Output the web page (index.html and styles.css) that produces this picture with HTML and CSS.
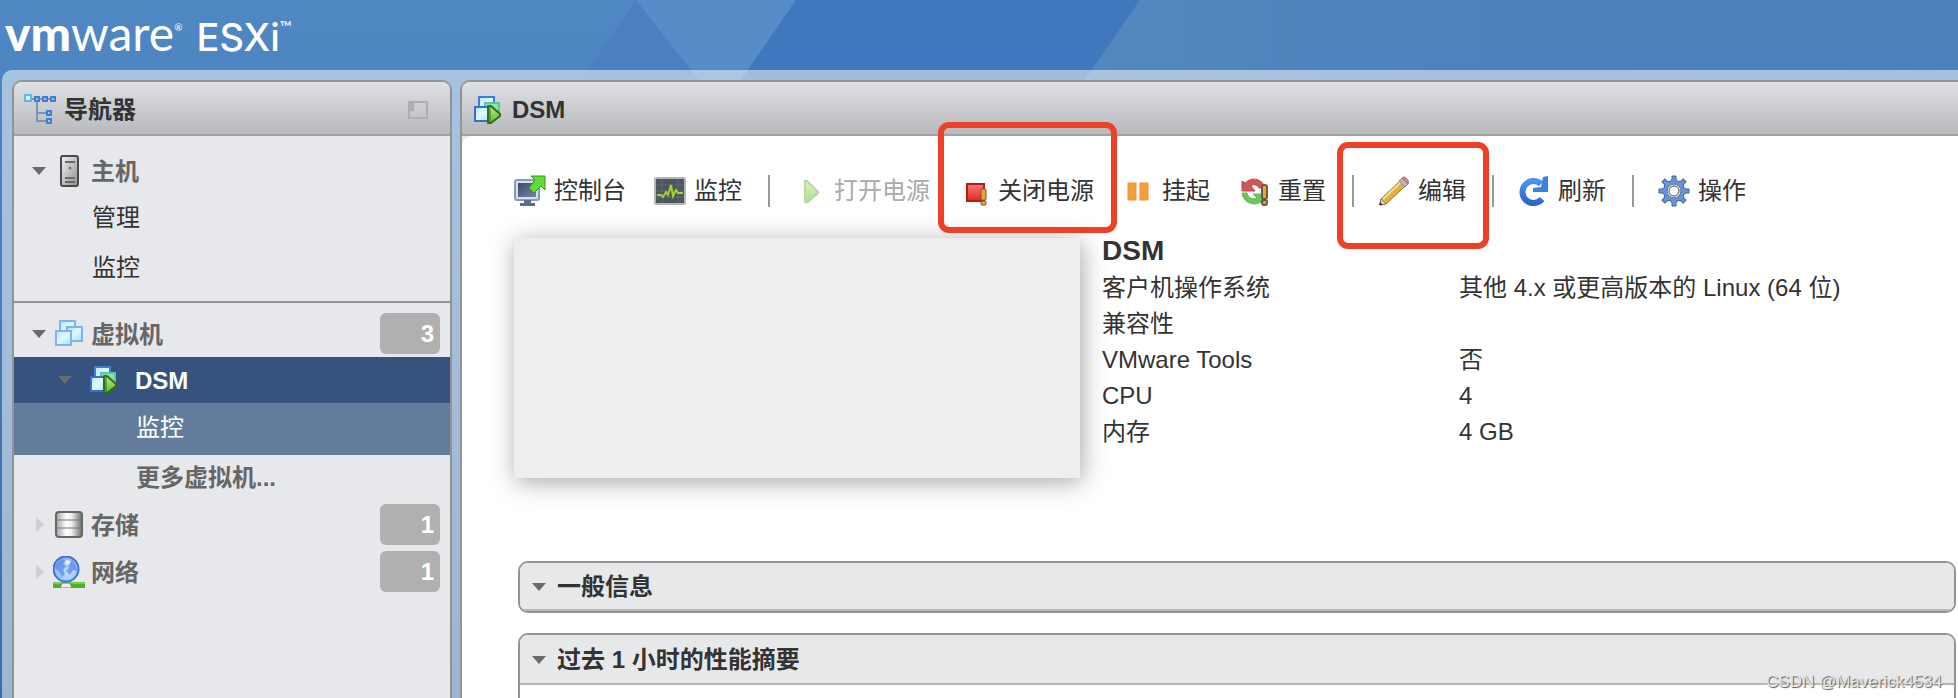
FILE: index.html
```html
<!DOCTYPE html>
<html lang="zh-CN">

<head>
    <meta charset="UTF-8">
    <meta name="viewport" content="width=device-width, initial-scale=1.0">
    <title>DSM - VMware ESXi</title>
    <link rel="stylesheet" href="styles.css">
</head>

<body>
    <!-- shared icons and gradients -->
    <svg class="defs" width="0" height="0" aria-hidden="true">
        <defs>
            <linearGradient id="g-vm" x1="0" y1="0" x2="1" y2="1">
                <stop offset="0" stop-color="#b4e4fa" />
                <stop offset=".5" stop-color="#dffafa" />
                <stop offset="1" stop-color="#a5dcf8" />
            </linearGradient>
            <linearGradient id="g-green" x1="0" y1="0" x2="0" y2="1">
                <stop offset="0" stop-color="#b9ec7c" />
                <stop offset="1" stop-color="#5fb934" />
            </linearGradient>
            <linearGradient id="g-metal" x1="0" y1="0" x2="1" y2="0">
                <stop offset="0" stop-color="#a2a2a2" />
                <stop offset=".4" stop-color="#fff" />
                <stop offset=".6" stop-color="#eee" />
                <stop offset="1" stop-color="#6c6c6c" />
            </linearGradient>
            <linearGradient id="g-host" x1="0" y1="0" x2="1" y2="1">
                <stop offset="0" stop-color="#f4f4f4" />
                <stop offset="1" stop-color="#8d8d8d" />
            </linearGradient>
            <linearGradient id="g-screen" x1="0" y1="0" x2="1" y2="1">
                <stop offset="0" stop-color="#3d4c69" />
                <stop offset="1" stop-color="#7385a6" />
            </linearGradient>
            <linearGradient id="g-red" x1="0" y1="0" x2="0" y2="1">
                <stop offset="0" stop-color="#f47a70" />
                <stop offset="1" stop-color="#e5261e" />
            </linearGradient>
            <linearGradient id="g-blue" x1="0" y1="0" x2="0" y2="1">
                <stop offset="0" stop-color="#4a92ee" />
                <stop offset="1" stop-color="#2f66cb" />
            </linearGradient>
            <radialGradient id="g-globe" cx=".6" cy=".65" r=".6">
                <stop offset="0" stop-color="#c4e1ff" />
                <stop offset="1" stop-color="#86b4f4" />
            </radialGradient>
        </defs>
        <symbol id="vm-on" viewBox="0 0 32 32">
            <rect x="7" y="3" width="15" height="13" fill="url(#g-vm)" stroke="#3f7fd3" stroke-width="2" />
            <rect x="13" y="9" width="14" height="13" fill="#8be3b4" stroke="#5cc5a0" stroke-width="2" />
            <rect x="3" y="13" width="15" height="14" fill="url(#g-vm)" stroke="#3b6fc6" stroke-width="2" />
            <path d="M16 12h3l9 8v2l-9 7h-3z" fill="url(#g-green)" stroke="#2c7018" stroke-width="2" stroke-linejoin="round" />
            <path d="M18 12v17" stroke="#2c7018" stroke-width="1" />
        </symbol>
        <symbol id="down" viewBox="0 0 18 18">
            <path d="M2 5h14l-7 8z" fill="#6b6b6b" />
        </symbol>
        <symbol id="right" viewBox="0 0 18 18">
            <path d="M6 1v15l8-7z" fill="#cfd0d4" />
        </symbol>
    </svg>

    <svg class="facets" width="1958" height="80" aria-hidden="true">
        <defs>
            <linearGradient id="g-edge" x1="0" y1="0" x2="1" y2="0">
                <stop offset="0" stop-color="#5388bf" />
                <stop offset=".3" stop-color="#4d82bc" />
                <stop offset="1" stop-color="#4b80ba" />
            </linearGradient>
        </defs>
        <path d="M636 0L581 80H699z" fill="#4b7fc0" />
        <path d="M636 0H796L741 80H699z" fill="#568cc7" />
        <path d="M796 0H1140L1085 80H741z" fill="#4178bd" />
        <path d="M1140 0H1958V80H1085z" fill="url(#g-edge)" />
    </svg>

    <header class="banner">
        <span class="vm">vm</span><span class="ware">ware</span><sup class="reg">®</sup>
        <span class="esxi">ESXi</span><sup class="tm">™</sup>
    </header>

    <div class="workspace">
        <nav class="panel navigator">
            <div class="panel-head">
                <svg class="icon" viewBox="0 0 32 32" fill="none">
                    <path d="M8 5h20M13 5v22h10M13 19h10" stroke="#8093b4" stroke-width="2" />
                    <path d="M1 1h6v6h-6z" fill="#c9f2fc" stroke="#62b5e8" stroke-width="2" />
                    <path d="M11 3h4v4h-4zM19 3h4v4h-4zM27 3h4v4h-4zM23 17h4v4h-4zM23 25h4v4h-4z" fill="#9cc8f7" stroke="#3f7fd6" stroke-width="2" />
                </svg>
                <h2>导航器</h2>
                <button class="collapse" aria-label="折叠">
                    <svg width="20" height="18" viewBox="0 0 20 18">
                        <path d="M1 1h18v16H1z" fill="none" stroke="#adaeb2" stroke-width="2" />
                        <path d="M1 1h5v9H1z" fill="#adaeb2" />
                    </svg>
                </button>
            </div>

            <div class="group host">
                <a class="item" href="#">
                    <svg class="arrow"><use href="#down" /></svg>
                    <svg class="icon" viewBox="0 0 32 32">
                        <rect x="8" y="1" width="17" height="30" rx="2" fill="url(#g-host)" stroke="#4a4a4a" stroke-width="2" />
                        <path d="M12 7h10M12 23h10M12 27h10" stroke="#6a6a6a" stroke-width="2" />
                        <circle cx="17" cy="13" r="1.5" fill="#777" />
                    </svg>
                    <span>主机</span>
                </a>
                <a class="sub" href="#">管理</a>
                <a class="sub tall" href="#">监控</a>
            </div>

            <div class="group">
                <a class="item" href="#">
                    <svg class="arrow"><use href="#down" /></svg>
                    <svg class="icon" viewBox="0 0 32 32" stroke="#7cb4f5" stroke-width="2" fill="url(#g-vm)">
                        <rect x="7" y="3" width="15" height="13" />
                        <rect x="14" y="9" width="15" height="14" />
                        <rect x="3" y="13" width="15" height="14" />
                    </svg>
                    <span>虚拟机</span>
                    <span class="count">3</span>
                </a>
                <a class="item selected" href="#">
                    <svg class="arrow"><use href="#down" /></svg>
                    <svg class="icon"><use href="#vm-on" /></svg>
                    <span>DSM</span>
                </a>
                <a class="sub deep tall current" href="#">监控</a>
                <a class="sub deep more" href="#">更多虚拟机...</a>
                <a class="item" href="#">
                    <svg class="arrow"><use href="#right" /></svg>
                    <svg class="icon" viewBox="0 0 32 32">
                        <rect x="3" y="3" width="26" height="25" rx="3" fill="url(#g-metal)" stroke="#666" stroke-width="2" />
                        <path d="M3 11h26M3 19h26" stroke="#777" stroke-width="1" />
                    </svg>
                    <span>存储</span>
                    <span class="count">1</span>
                </a>
                <a class="item" href="#">
                    <svg class="arrow"><use href="#right" /></svg>
                    <svg class="icon" viewBox="0 0 32 32">
                        <path d="M0 26h32v6H0z" fill="#4fb02b" />
                        <path d="M0 26h32v2H0z" fill="#77cf50" />
                        <path d="M7 32l2-5h8l2 5z" fill="#eee" stroke="#777" />
                        <circle cx="13" cy="13" r="12.5" fill="url(#g-globe)" stroke="#3c74cd" stroke-width="2" />
                        <path d="M3 8l5-5 4 1-2 4 3 2-3 4 2 4-3 3-3-6-4-3z" fill="#628ee8" opacity=".8" />
                        <path d="M19 4l4 5 1 6-4-1-3 5-4-4 3-3-1-5z" fill="#628ee8" opacity=".8" />
                        <path d="M13 4l5 1-2 4-4-1z" fill="#fff" opacity=".8" />
                    </svg>
                    <span>网络</span>
                    <span class="count">1</span>
                </a>
            </div>
        </nav>

        <main class="panel detail">
            <div class="panel-head">
                <svg class="icon"><use href="#vm-on" /></svg>
                <h2>DSM</h2>
            </div>

            <div class="content">
                <div class="toolbar">
                    <button>
                        <svg class="icon" viewBox="0 0 32 32">
                            <rect x="1" y="5" width="24" height="20" rx="2" fill="#d6dfec" stroke="#8b9cb9" stroke-width="2" />
                            <rect x="4" y="8" width="18" height="14" fill="url(#g-screen)" />
                            <path d="M10 25h7v3h4v3H6v-3h4z" fill="#5a6d90" />
                            <path d="M17 1h14v14l-4-4-7 7-5-5 6-8z" fill="#5fdc35" stroke="#2f9a17" />
                        </svg>
                        控制台
                    </button>
                    <button>
                        <svg class="icon" viewBox="0 0 32 32">
                            <rect x="1" y="3" width="30" height="26" rx="1" fill="#4b575e" stroke="#b4b7b9" stroke-width="2" />
                            <path d="M2 10h28M2 16h28M2 22h28M8 4v24M24 4v24" stroke="#5e6a70" />
                            <path d="M3 20h4l2 2 3-5 2 3 3-10 2 11 3-6 2 3h5" fill="none" stroke="#a9cf2c" stroke-width="2" />
                        </svg>
                        监控
                    </button>
                    <span class="sep"></span>
                    <button disabled>
                        <svg class="icon" viewBox="0 0 32 32">
                            <path d="M11 6h2l11 11v1L14 27h-3z" fill="url(#g-green)" stroke="#6bb64e" stroke-width="2" />
                        </svg>
                        打开电源
                    </button>
                    <button class="marked power">
                        <svg class="icon" viewBox="0 0 32 32">
                            <rect x="9" y="9" width="17" height="17" fill="url(#g-red)" stroke="#b41d17" stroke-width="2" />
                            <rect x="23" y="14" width="5" height="11" rx="1" fill="#f3a129" stroke="#6b5b43" />
                            <rect x="23" y="26" width="5" height="4" rx="1" fill="#f3a129" stroke="#6b5b43" />
                        </svg>
                        关闭电源
                    </button>
                    <button>
                        <svg class="icon" viewBox="0 0 32 32" fill="#f0a035" stroke="#e8953a">
                            <rect x="6" y="8" width="8" height="17" />
                            <rect x="18" y="8" width="8" height="17" />
                        </svg>
                        挂起
                    </button>
                    <button>
                        <svg class="icon" viewBox="0 0 32 32">
                            <path d="M4 18h5c1 5 6 7 10 5l-4-4h12v11l-4-3C15 32 5 27 4 18z" fill="#69c657" stroke="#6cba62" />
                            <path d="M4 6l3 2C14 1 25 4 27 13h-6c-2-4-6-4-8-2l4 5H4z" fill="#cf5a54" stroke="#b94a48" />
                            <rect x="24" y="10" width="5" height="14" rx="2" fill="#f3a129" stroke="#6b5b43" stroke-width="2" />
                            <rect x="24" y="25" width="5" height="5" rx="2" fill="#f3a129" stroke="#6b5b43" stroke-width="2" />
                        </svg>
                        重置
                    </button>
                    <span class="sep"></span>
                    <button class="marked edit">
                        <svg class="icon" viewBox="0 0 32 32">
                            <path d="M3 24L22 6l5 5L8 29l-6 1z" fill="#e3b043" stroke="#8c6c2a" />
                            <path d="M5 24L23 7" stroke="#f8dd8c" stroke-width="2" />
                            <path d="M2 30l1-6 5 5z" fill="#efdcae" stroke="#8f8265" />
                            <path d="M1 30l1-3 3 3z" fill="#333" />
                            <path d="M21 6l3-3 6 6-3 3z" fill="#b8b8b8" stroke="#888" />
                            <path d="M24 3c2-3 8 2 6 6z" fill="#d98583" stroke="#a86b69" />
                        </svg>
                        编辑
                    </button>
                    <span class="sep"></span>
                    <button>
                        <svg class="icon" viewBox="0 0 32 32">
                            <path d="M24 24A11 11 0 1 1 23 9" fill="none" stroke="url(#g-blue)" stroke-width="6" />
                            <path d="M25 2l5-1v16H15v-4l8-1z" fill="#3c80e0" />
                        </svg>
                        刷新
                    </button>
                    <span class="sep"></span>
                    <button>
                        <svg class="icon" viewBox="0 0 32 32">
                            <g fill="#6594db" stroke="#46618f">
                                <path id="tooth" d="M12 7l2-3V1h4v3l2 3v18l-2 3v3h-4v-3l-2-3z" />
                                <use href="#tooth" transform="rotate(45 16 16)" />
                                <use href="#tooth" transform="rotate(90 16 16)" />
                                <use href="#tooth" transform="rotate(135 16 16)" />
                            </g>
                            <circle cx="16" cy="16" r="10" fill="#6594db" />
                            <circle cx="16" cy="16" r="7" fill="#e4e4e4" stroke="#5c7095" />
                            <circle cx="16" cy="16" r="5" fill="#fff" stroke="#555" />
                        </svg>
                        操作
                    </button>
                </div>

                <div class="summary">
                    <div class="thumb"></div>
                    <div class="facts">
                        <h1>DSM</h1>
                        <dl>
                            <dt>客户机操作系统</dt>
                            <dd>其他 4.x 或更高版本的 Linux (64 位)</dd>
                            <dt>兼容性</dt>
                            <dd></dd>
                            <dt>VMware Tools</dt>
                            <dd>否</dd>
                            <dt>CPU</dt>
                            <dd>4</dd>
                            <dt>内存</dt>
                            <dd>4 GB</dd>
                        </dl>
                    </div>
                </div>

                <section class="card">
                    <h3><svg class="arrow"><use href="#down" /></svg>一般信息</h3>
                </section>
                <section class="card open">
                    <h3><svg class="arrow"><use href="#down" /></svg>过去 1 小时的性能摘要</h3>
                </section>
            </div>
        </main>
    </div>

    <div class="watermark">CSDN @Maverick4534</div>
</body>

</html>
```

FILE: styles.css
```css
* {
    margin: 0;
    padding: 0;
    box-sizing: border-box;
}

body {
    height: 100vh;
    display: flex;
    flex-direction: column;
    overflow: hidden;
    position: relative;
    font-family: "Liberation Sans", "Noto Sans CJK SC", Arial, sans-serif;
    font-size: 24px;
    line-height: 36px;
    color: #333;
    background: linear-gradient(#4f88c3, #3d6ca6);
}

a {
    color: inherit;
    text-decoration: none;
}

.defs {
    position: absolute;
}

.facets {
    position: absolute;
    top: 0;
    left: 0;
    z-index: -1;
}

/* banner */
.banner {
    height: 70px;
    flex-shrink: 0;
    display: flex;
    align-items: baseline;
    padding-left: 5px;
    color: #fff;
    font-family: Lato, sans-serif;
    line-height: 66px;
    white-space: nowrap;
}

.vm {
    font-size: 48px;
    font-weight: 900;
}

.ware {
    font-size: 48px;
}

.esxi {
    font-family: Inter, sans-serif;
    font-size: 38px;
    font-weight: 500;
    margin-left: 14px;
}

.reg,
.tm {
    font-size: 10px;
    line-height: 10px;
    align-self: flex-start;
    margin-top: 22px;
}

.tm {
    font-size: 16px;
}

/* panels */
.workspace {
    flex: 1;
    min-height: 0;
    display: flex;
    gap: 8px;
    margin-left: 2px;
    padding: 10px 0 0 10px;
    background: rgba(255, 255, 255, 0.5);
    border-top-left-radius: 10px;
}

.panel {
    display: flex;
    flex-direction: column;
    overflow: hidden;
    background: #e7e8ec;
    border: 2px solid #939393;
    border-bottom: 0;
    border-radius: 10px 10px 0 0;
}

.navigator {
    width: 440px;
    flex-shrink: 0;
}

.detail {
    flex: 1;
    min-width: 0;
    border-right: 0;
    border-radius: 10px 0 0 0;
}

.panel-head {
    height: 54px;
    flex-shrink: 0;
    display: flex;
    align-items: center;
    gap: 8px;
    padding: 3px 22px 0 10px;
    background: linear-gradient(#dfe0e4, #b8b9bd);
    border-bottom: 2px solid #a0a0a2;
}

.panel-head h2 {
    font-size: 24px;
}

.icon {
    width: 32px;
    height: 32px;
    flex-shrink: 0;
}

.arrow {
    width: 18px;
    height: 18px;
    flex-shrink: 0;
}

button {
    font: inherit;
    color: inherit;
    background: none;
    border: 0;
    cursor: pointer;
}

.collapse {
    display: flex;
    margin-left: auto;
}

/* navigator tree */
.group {
    padding-top: 7px;
}

.group.host {
    padding: 11px 0 7px;
    border-bottom: 2px solid #939393;
}

.item {
    height: 47px;
    display: flex;
    align-items: center;
    gap: 5px;
    padding: 0 10px 0 16px;
    font-weight: bold;
    color: #666;
}

.item .icon + span {
    padding: 2px 0 0 1px;
}

.count {
    width: 60px;
    height: 41px;
    margin-left: auto;
    padding-right: 6px;
    text-align: right;
    line-height: 41px;
    color: #fff;
    background: #b0b0b0;
    border-radius: 6px;
}

.selected {
    height: 46px;
    gap: 14px;
    padding-left: 42px;
    color: #fff;
    background: #35537d;
}

.sub {
    display: block;
    padding-left: 78px;
    line-height: 48px;
}

.sub.tall {
    line-height: 52px;
}

.sub.deep {
    padding-left: 122px;
}

.sub.current {
    padding-bottom: 2px;
    line-height: 50px;
    color: #fff;
    background: #647c9b;
}

.sub.more {
    line-height: 46px;
    font-weight: bold;
    color: #666;
}

/* virtual machine page */
.content {
    flex: 1;
    padding: 37px 2px 0 52px;
    background: #fff;
    border-top-left-radius: 10px;
}

.toolbar {
    display: flex;
    align-items: center;
    margin-bottom: 23px;
    white-space: nowrap;
}

.toolbar button {
    display: flex;
    align-items: center;
    gap: 8px;
    margin-right: 28px;
    position: relative;
}

.toolbar button:disabled {
    color: #aaa;
}

.toolbar button:disabled .icon {
    opacity: 0.5;
}

.sep {
    width: 2px;
    height: 32px;
    margin: 0 24px 0 -2px;
    background: #999;
}

.marked::after {
    content: "";
    position: absolute;
    border: 6px solid #ec4127;
    border-radius: 11px;
}

.power::after {
    inset: -51px -23px -24px -20px;
}

.edit::after {
    inset: -31px -23px -40px -41px;
}

.summary {
    display: flex;
    gap: 22px;
    margin-bottom: 83px;
}

.thumb {
    width: 566px;
    height: 240px;
    margin-top: 6px;
    background: #eee;
    box-shadow: 2px 4px 24px rgba(0, 0, 0, 0.35);
}

.facts {
    flex: 1;
}

.facts h1 {
    font-size: 28px;
    line-height: 38px;
}

.facts dl {
    display: grid;
    grid-template-columns: 357px 1fr;
    grid-auto-rows: 36px;
}

.card {
    margin: 0 0 20px 4px;
    border: 2px solid #939393;
    border-radius: 10px;
    overflow: hidden;
}

.card h3 {
    height: 50px;
    display: flex;
    align-items: center;
    gap: 9px;
    padding: 2px 0 0 10px;
    font-size: 24px;
    background: #e7e8ea;
    border-bottom: 2px solid #b7b7b7;
}

.card:not(.open) h3 {
    height: 48px;
}

.card.open {
    min-height: 200px;
}

.watermark {
    position: absolute;
    right: 16px;
    bottom: 4px;
    font-size: 17px;
    line-height: 24px;
    color: #e6e6e6;
    text-shadow: 1px 1px 1px #555;
}
```
